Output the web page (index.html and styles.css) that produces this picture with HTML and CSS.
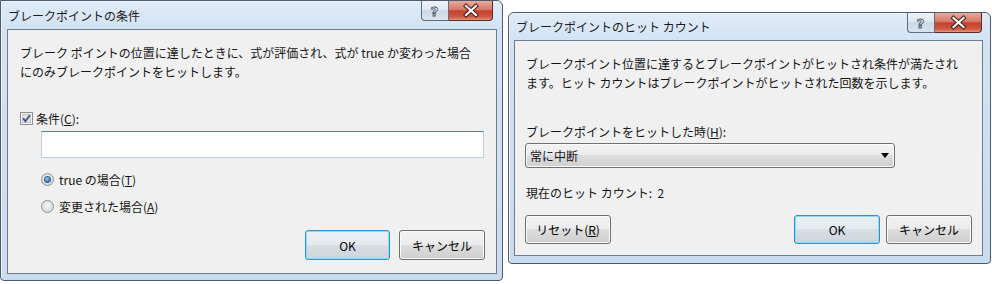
FILE: index.html
```html
<!DOCTYPE html>
<html lang="ja">
<head>
    <meta charset="UTF-8">
    <title>ブレークポイント</title>
    <link rel="stylesheet" href="styles.css">
</head>
<body>
    <div class="desk">
        <!-- Condition dialog -->
        <div class="window win-cond">
            <div class="titlebar">
                <span class="title">ブレークポイントの条件</span>
                <div class="caption">
                    <span class="cap-help"><svg width="27" height="20" viewBox="0 0 27 20"><text x="13.5" y="15" text-anchor="middle" font-family="DejaVu Sans" font-weight="bold" font-size="13" fill="#f4f7fb" stroke="#4c5868" stroke-width="0.9">?</text></svg></span>
                    <span class="cap-close"><svg width="44" height="20" viewBox="0 0 44 20"><path d="M17 5 L27 14 M27 5 L17 14" stroke="#4a1a14" stroke-width="4.2" stroke-linecap="square"/><path d="M17 5 L27 14 M27 5 L17 14" stroke="#fff" stroke-width="2.2" stroke-linecap="square"/></svg></span>
                </div>
            </div>
            <div class="client">
                <p class="desc">ブレーク ポイントの位置に達したときに、式が評価され、式が true か変わった場合<br>にのみブレークポイントをヒットします。</p>
                <div class="check-row">
                    <svg class="checkbox" width="13" height="13" viewBox="0 0 13 13"><rect x="0.5" y="0.5" width="12" height="12" fill="#f4f4f4" stroke="#8e8f8f"/><rect x="2.5" y="2.5" width="8" height="8" fill="#e6e6e6" stroke="#c6c6c6"/><path d="M3.2 6.4 L5.4 9.2 L9.8 3.2" fill="none" stroke="#3d4f86" stroke-width="1.8"/></svg>
                    <span>条件(<u>C</u>):</span>
                </div>
                <input class="cond-input" type="text">
                <div class="radio-row first">
                    <span class="radio on"></span>
                    <span>true の場合(<u>T</u>)</span>
                </div>
                <div class="radio-row second">
                    <span class="radio"></span>
                    <span>変更された場合(<u>A</u>)</span>
                </div>
                <div class="btn-row">
                    <button class="btn default ok-left">OK</button>
                    <button class="btn cancel-left">キャンセル</button>
                </div>
            </div>
        </div>

        <!-- Hit count dialog -->
        <div class="window win-hit">
            <div class="titlebar">
                <span class="title">ブレークポイントのヒット カウント</span>
                <div class="caption">
                    <span class="cap-help"><svg width="27" height="20" viewBox="0 0 27 20"><text x="13.5" y="15" text-anchor="middle" font-family="DejaVu Sans" font-weight="bold" font-size="13" fill="#f4f7fb" stroke="#4c5868" stroke-width="0.9">?</text></svg></span>
                    <span class="cap-close wide"><svg width="47" height="20" viewBox="0 0 47 20"><path d="M18.5 5 L28.5 14 M28.5 5 L18.5 14" stroke="#4a1a14" stroke-width="4.2" stroke-linecap="square"/><path d="M18.5 5 L28.5 14 M28.5 5 L18.5 14" stroke="#fff" stroke-width="2.2" stroke-linecap="square"/></svg></span>
                </div>
            </div>
            <div class="client hit-client">
                <p class="desc">ブレークポイント位置に達するとブレークポイントがヒットされ条件が満たされ<br>ます。ヒット カウントはブレークポイントがヒットされた回数を示します。</p>
                <div class="hit-label">ブレークポイントをヒットした時(<u>H</u>):</div>
                <div class="combo">
                    <span>常に中断</span>
                    <svg width="8" height="5" viewBox="0 0 8 5"><path d="M0 0 H8 L4 5 Z" fill="#000"/></svg>
                </div>
                <div class="count-label">現在のヒット カウント:&nbsp;&nbsp;2</div>
                <div class="btn-row hit-btns">
                    <button class="btn reset">リセット(<u>R</u>)</button>
                    <button class="btn default">OK</button>
                    <button class="btn">キャンセル</button>
                </div>
            </div>
        </div>
    </div>
</body>
</html>
```

FILE: styles.css
```css
body {
    margin: 0;
    background: #fff;
    font-family: "Noto Sans CJK JP", sans-serif;
    font-size: 12px;
    color: #141414;
}
.desk {
    display: flex;
    align-items: flex-start;
    width: 992px;
    height: 284px;
    overflow: hidden;
}
.window {
    box-sizing: border-box;
    display: flex;
    flex-direction: column;
    border: 1px solid #4d5a6b;
    background: linear-gradient(180deg, #dfebf8 0, #d3e3f4 28px, #c9dbef 100%);
    box-shadow: inset 1px 1px 0 #eef5fc;
}
.win-cond {
    width: 503px;
    height: 281px;
    padding: 0 5px 6px 6px;
    border-radius: 0 6px 4px 4px;
}
.win-hit {
    width: 483px;
    height: 252px;
    margin: 12px 0 0 5px;
    padding: 0 7px 7px 5px;
    border-radius: 6px 6px 4px 4px;
}
.titlebar {
    display: flex;
    align-items: flex-start;
    flex: none;
}
.win-cond .titlebar {
    height: 28px;
}
.win-hit .titlebar {
    height: 27px;
}
.title {
    align-self: center;
    color: #1b1b1b;
}
.win-cond .title {
    padding-left: 1px;
}
.win-hit .title {
    padding-left: 2px;
}
.caption {
    margin-left: auto;
    display: flex;
    height: 20px;
}
.win-cond .caption {
    margin-right: 4px;
}
.win-hit .caption {
    margin-right: 1px;
}
.caption svg {
    display: block;
}
.cap-help {
    box-sizing: border-box;
    width: 28px;
    height: 20px;
    border: 1px solid #5e6d80;
    border-top: none;
    border-radius: 0 0 0 4px;
    background: linear-gradient(180deg, #eef3f9 0, #dfe7f1 45%, #cdd9e7 50%, #d8e3ef 100%);
    overflow: hidden;
}
.cap-help svg {
    margin-left: -1px;
}
.cap-close {
    box-sizing: border-box;
    width: 44px;
    height: 20px;
    border: 1px solid #5c2a25;
    border-left: none;
    border-top: none;
    border-radius: 0 0 4px 0;
    background: linear-gradient(180deg, #e8aa9c 0, #d77767 45%, #c4402f 52%, #cf5a45 85%, #e09a7c 100%);
    overflow: hidden;
}
.cap-close.wide {
    width: 47px;
}
.client {
    flex: 1;
    box-sizing: border-box;
    border: 1px solid #6f7c8a;
    background: #f0f0f0;
    display: flex;
    flex-direction: column;
    padding: 13px 11px 13px 12px;
}
.desc {
    margin: 0;
    line-height: 19px;
}
.check-row {
    display: flex;
    align-items: center;
    height: 16px;
    margin-top: 29px;
}
.checkbox {
    margin-right: 3px;
    flex: none;
}
.cond-input {
    box-sizing: border-box;
    width: 443px;
    height: 27px;
    margin: 5px 0 0 21px;
    border: 1px solid #b8d0df;
    border-top-color: #587b9b;
    background: #fff;
    padding: 0;
}
.radio-row {
    display: flex;
    align-items: center;
    height: 16px;
    margin-left: 21px;
}
.radio-row.first {
    margin-top: 13px;
}
.radio-row.second {
    margin-top: 11px;
}
.radio {
    box-sizing: border-box;
    width: 13px;
    height: 13px;
    border-radius: 50%;
    border: 1px solid #8e8f8f;
    background: radial-gradient(circle at 50% 40%, #f4f4f4 0, #e0e0e0 60%, #d0d0d0 100%);
    margin-right: 5px;
    display: flex;
    align-items: center;
    justify-content: center;
    flex: none;
}
.radio.on::after {
    content: "";
    width: 5px;
    height: 5px;
    border-radius: 50%;
    background: radial-gradient(circle at 40% 35%, #8cd3f7 0, #2a7dbd 60%, #17466f 100%);
    box-shadow: 0 0 0 1px #325f88;
}
.btn-row {
    margin-top: auto;
    display: flex;
    justify-content: flex-end;
    gap: 9px;
}
.btn {
    box-sizing: border-box;
    width: 86px;
    height: 30px;
    padding: 0;
    border: 1px solid #707070;
    border-radius: 3px;
    background: linear-gradient(180deg, #f2f2f2 0, #ebebeb 50%, #dddddd 50%, #cfcfcf 100%);
    box-shadow: inset 0 0 0 1px #fbfbfb;
    font: inherit;
    color: #000;
}
.btn.default {
    border-color: #2f92cf;
    background: linear-gradient(180deg, #eaf0f3 0, #e3eaee 50%, #d7dfe3 50%, #ccd5da 100%);
    box-shadow: inset 0 0 0 1px #8fdaf8;
}
.ok-left {
    width: 85px;
}
.win-cond .btn-row {
    margin-right: 0;
}
.hit-client {
    padding: 13px 10px 11px 11px;
}
.hit-label {
    height: 16px;
    line-height: 16px;
    margin-top: 32px;
}
.combo {
    box-sizing: border-box;
    width: 370px;
    height: 25px;
    margin: 3px 0 0 -1px;
    padding: 0 5px 0 4px;
    border: 1px solid #707070;
    border-radius: 3px;
    background: linear-gradient(180deg, #f2f2f2 0, #ebebeb 50%, #dddddd 50%, #cfcfcf 100%);
    box-shadow: inset 0 0 0 1px #fbfbfb;
    display: flex;
    align-items: center;
    justify-content: space-between;
}
.count-label {
    height: 16px;
    line-height: 16px;
    margin-top: 17px;
}
.hit-btns {
    gap: 6px;
}
.hit-btns .btn {
    height: 29px;
}
.reset {
    margin-right: auto;
    margin-left: -1px;
}
```
